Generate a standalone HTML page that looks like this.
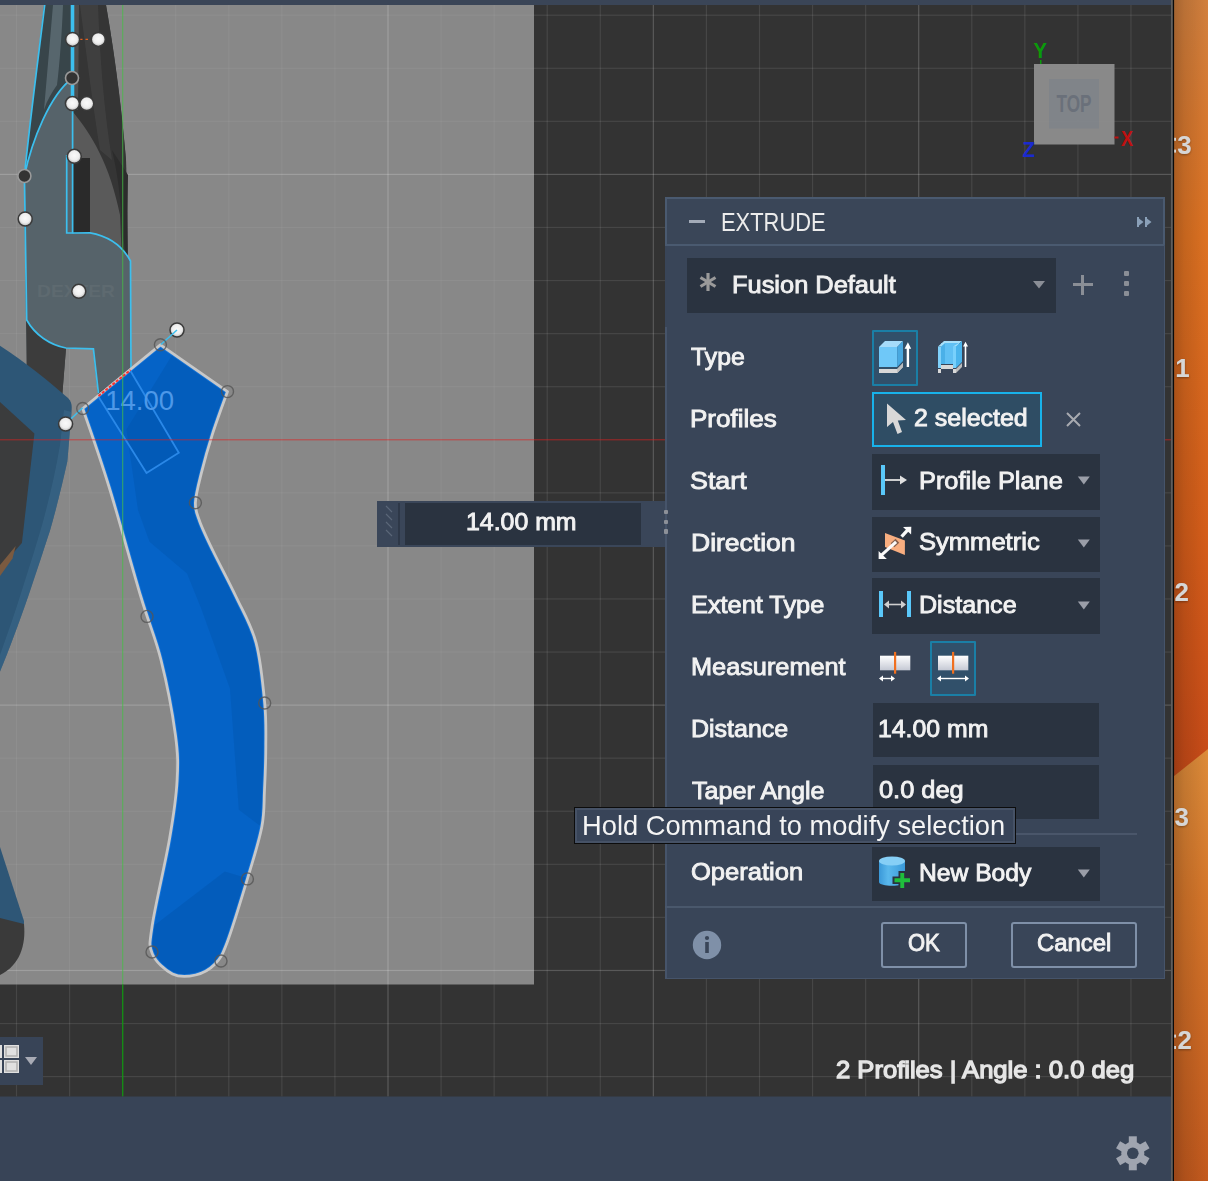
<!DOCTYPE html>
<html><head><meta charset="utf-8">
<style>
html,body{margin:0;padding:0;width:1208px;height:1181px;overflow:hidden;background:#333;}
body{position:relative;font-family:"Liberation Sans",sans-serif;}
.abs{position:absolute;}
.t{position:absolute;white-space:nowrap;transform-origin:0 0;font-family:"Liberation Sans",sans-serif;}
svg text{font-family:"Liberation Sans",sans-serif;}
</style></head><body>
<svg class="abs" width="1208" height="1181" viewBox="0 0 1208 1181">
<defs><linearGradient id="orng" x1="0" y1="0" x2="0" y2="1"><stop offset="0" stop-color="#d2803e"/><stop offset="0.2" stop-color="#de7222"/><stop offset="0.45" stop-color="#d65e1a"/><stop offset="0.66" stop-color="#c84a18"/><stop offset="1" stop-color="#c84a18"/></linearGradient><linearGradient id="orng2" x1="0" y1="0" x2="0" y2="1"><stop offset="0" stop-color="#de8c3a"/><stop offset="0.35" stop-color="#d6762a"/><stop offset="1" stop-color="#c45a1e"/></linearGradient><linearGradient id="oshadow" x1="0" y1="0" x2="1" y2="0"><stop offset="0" stop-color="#000" stop-opacity="0.22"/><stop offset="0.3" stop-color="#000" stop-opacity="0.12"/><stop offset="1" stop-color="#000" stop-opacity="0"/></linearGradient><linearGradient id="pl1" x1="0" y1="0" x2="1" y2="0"><stop offset="0" stop-color="#2f3a3f"/><stop offset="0.5" stop-color="#4a555a"/><stop offset="1" stop-color="#2e3436"/></linearGradient><linearGradient id="pl2" x1="0" y1="0" x2="1" y2="0"><stop offset="0" stop-color="#3a3a3a"/><stop offset="0.6" stop-color="#333"/><stop offset="1" stop-color="#222"/></linearGradient></defs>
<rect x="0" y="0" width="1173" height="1181" fill="#333333"/>
<rect x="0" y="5" width="534" height="979.5" fill="#888888"/>
<rect x="15.91" y="5" width="1.2" height="979.5" fill="#fff" opacity="0.050"/>
<rect x="15.91" y="984.5" width="1.2" height="112.0" fill="#fff" opacity="0.095"/>
<rect x="68.98" y="5" width="1.2" height="979.5" fill="#fff" opacity="0.050"/>
<rect x="68.98" y="984.5" width="1.2" height="112.0" fill="#fff" opacity="0.095"/>
<rect x="175.12" y="5" width="1.2" height="979.5" fill="#fff" opacity="0.050"/>
<rect x="175.12" y="984.5" width="1.2" height="112.0" fill="#fff" opacity="0.095"/>
<rect x="228.19" y="5" width="1.2" height="979.5" fill="#fff" opacity="0.050"/>
<rect x="228.19" y="984.5" width="1.2" height="112.0" fill="#fff" opacity="0.095"/>
<rect x="281.26" y="5" width="1.2" height="979.5" fill="#fff" opacity="0.050"/>
<rect x="281.26" y="984.5" width="1.2" height="112.0" fill="#fff" opacity="0.095"/>
<rect x="334.33" y="5" width="1.2" height="979.5" fill="#fff" opacity="0.050"/>
<rect x="334.33" y="984.5" width="1.2" height="112.0" fill="#fff" opacity="0.095"/>
<rect x="387.40" y="5" width="1.2" height="979.5" fill="#fff" opacity="0.190"/>
<rect x="387.40" y="984.5" width="1.2" height="112.0" fill="#fff" opacity="0.190"/>
<rect x="440.47" y="5" width="1.2" height="979.5" fill="#fff" opacity="0.050"/>
<rect x="440.47" y="984.5" width="1.2" height="112.0" fill="#fff" opacity="0.095"/>
<rect x="493.54" y="5" width="1.2" height="979.5" fill="#fff" opacity="0.050"/>
<rect x="493.54" y="984.5" width="1.2" height="112.0" fill="#fff" opacity="0.095"/>
<rect x="546.61" y="5" width="1.2" height="1091.5" fill="#fff" opacity="0.095"/>
<rect x="599.68" y="5" width="1.2" height="1091.5" fill="#fff" opacity="0.095"/>
<rect x="652.75" y="5" width="1.2" height="1091.5" fill="#fff" opacity="0.190"/>
<rect x="705.82" y="5" width="1.2" height="1091.5" fill="#fff" opacity="0.095"/>
<rect x="758.89" y="5" width="1.2" height="1091.5" fill="#fff" opacity="0.095"/>
<rect x="811.96" y="5" width="1.2" height="1091.5" fill="#fff" opacity="0.095"/>
<rect x="865.03" y="5" width="1.2" height="1091.5" fill="#fff" opacity="0.095"/>
<rect x="918.10" y="5" width="1.2" height="1091.5" fill="#fff" opacity="0.190"/>
<rect x="971.17" y="5" width="1.2" height="1091.5" fill="#fff" opacity="0.095"/>
<rect x="1024.24" y="5" width="1.2" height="1091.5" fill="#fff" opacity="0.095"/>
<rect x="1077.31" y="5" width="1.2" height="1091.5" fill="#fff" opacity="0.095"/>
<rect x="1130.38" y="5" width="1.2" height="1091.5" fill="#fff" opacity="0.095"/>
<rect x="0" y="14.60" width="534" height="1.2" fill="#fff" opacity="0.050"/>
<rect x="534" y="14.60" width="639" height="1.2" fill="#fff" opacity="0.095"/>
<rect x="0" y="67.67" width="534" height="1.2" fill="#fff" opacity="0.050"/>
<rect x="534" y="67.67" width="639" height="1.2" fill="#fff" opacity="0.095"/>
<rect x="0" y="120.74" width="534" height="1.2" fill="#fff" opacity="0.050"/>
<rect x="534" y="120.74" width="639" height="1.2" fill="#fff" opacity="0.095"/>
<rect x="0" y="173.81" width="534" height="1.2" fill="#fff" opacity="0.190"/>
<rect x="534" y="173.81" width="639" height="1.2" fill="#fff" opacity="0.190"/>
<rect x="0" y="226.88" width="534" height="1.2" fill="#fff" opacity="0.050"/>
<rect x="534" y="226.88" width="639" height="1.2" fill="#fff" opacity="0.095"/>
<rect x="0" y="279.95" width="534" height="1.2" fill="#fff" opacity="0.050"/>
<rect x="534" y="279.95" width="639" height="1.2" fill="#fff" opacity="0.095"/>
<rect x="0" y="333.02" width="534" height="1.2" fill="#fff" opacity="0.050"/>
<rect x="534" y="333.02" width="639" height="1.2" fill="#fff" opacity="0.095"/>
<rect x="0" y="386.09" width="534" height="1.2" fill="#fff" opacity="0.050"/>
<rect x="534" y="386.09" width="639" height="1.2" fill="#fff" opacity="0.095"/>
<rect x="0" y="492.23" width="534" height="1.2" fill="#fff" opacity="0.050"/>
<rect x="534" y="492.23" width="639" height="1.2" fill="#fff" opacity="0.095"/>
<rect x="0" y="545.30" width="534" height="1.2" fill="#fff" opacity="0.050"/>
<rect x="534" y="545.30" width="639" height="1.2" fill="#fff" opacity="0.095"/>
<rect x="0" y="598.37" width="534" height="1.2" fill="#fff" opacity="0.050"/>
<rect x="534" y="598.37" width="639" height="1.2" fill="#fff" opacity="0.095"/>
<rect x="0" y="651.44" width="534" height="1.2" fill="#fff" opacity="0.050"/>
<rect x="534" y="651.44" width="639" height="1.2" fill="#fff" opacity="0.095"/>
<rect x="0" y="704.51" width="534" height="1.2" fill="#fff" opacity="0.190"/>
<rect x="534" y="704.51" width="639" height="1.2" fill="#fff" opacity="0.190"/>
<rect x="0" y="757.58" width="534" height="1.2" fill="#fff" opacity="0.050"/>
<rect x="534" y="757.58" width="639" height="1.2" fill="#fff" opacity="0.095"/>
<rect x="0" y="810.65" width="534" height="1.2" fill="#fff" opacity="0.050"/>
<rect x="534" y="810.65" width="639" height="1.2" fill="#fff" opacity="0.095"/>
<rect x="0" y="863.72" width="534" height="1.2" fill="#fff" opacity="0.050"/>
<rect x="534" y="863.72" width="639" height="1.2" fill="#fff" opacity="0.095"/>
<rect x="0" y="916.79" width="534" height="1.2" fill="#fff" opacity="0.050"/>
<rect x="534" y="916.79" width="639" height="1.2" fill="#fff" opacity="0.095"/>
<rect x="0" y="969.86" width="534" height="1.2" fill="#fff" opacity="0.190"/>
<rect x="534" y="969.86" width="639" height="1.2" fill="#fff" opacity="0.190"/>
<rect x="0" y="1022.93" width="1173" height="1.2" fill="#fff" opacity="0.095"/>
<rect x="0" y="1076.00" width="1173" height="1.2" fill="#fff" opacity="0.095"/>
<path d="M44,5 L106,5 C113,45 121,100 126,160 L128,262 L129,345 L131,372 L98,394 L93,349 L66,348 L62,398 L27,398 L26,320 L24,176 C30,120 38,60 44,5 Z" fill="#3a3e40"/>
<path d="M73,5 L106,5 C113,45 121,100 126,160 L128,262 L73,262 Z" fill="#353535"/>
<path d="M80,5 L98,5 C100,60 104,110 112,160 L100,150 C92,100 86,50 80,5 Z" fill="#444" opacity="0.7"/>
<path d="M73,112 C92,135 110,165 120,215 L122,262 L90,262 L90,158 L73,158 Z" fill="#5a5a5a"/>
<path d="M112,150 C118,175 121,200 122,230 L127,262 L128,175 Z" fill="#2c2c2c"/>
<rect x="73.5" y="158" width="16.5" height="75" fill="#2a2a2a"/>
<path d="M27,320 C35,335 50,345 66,348 L62,398 L27,398 Z" fill="#3c3c3c"/>
<path d="M44.7,5 L72.5,5 L72.5,78 C50,95 32,140 24.4,176 C30,120 38,60 44.7,5 Z" fill="#38454a"/>
<path d="M53,5 L63,5 C62,30 60,60 57,85 C52,92 47,100 44,110 C47,75 50,40 53,5 Z" fill="#62727a" opacity="0.75"/>
<path d="M73.5,5 L79,5 L78,110 L73.5,110 Z" fill="#555" opacity="0.8"/>
<path d="M72.5,78 L72.5,233 L90,232.8 C108,236 122,245 130.5,261 L131,370 L98.4,392.7 L93.4,348.8 L66,348 C50,345 35,335 26.7,320 L24.4,176 C32,140 50,95 72.5,78 Z" fill="#56636a"/>
<text x="37" y="297" font-family="Liberation Sans" font-weight="700" font-size="17" fill="#5e6a70" textLength="78" lengthAdjust="spacingAndGlyphs">DEXTER</text>
<path d="M44.7,5 C38,60 30,120 24.4,176 L26.7,320 C35,335 50,345 66,348 L93.4,348.8 L98.4,393" fill="none" stroke="#3cbfee" stroke-width="1.7"/>
<path d="M72.6,5 L72.6,233 L66.7,233 L66.7,155" fill="none" stroke="#3cbfee" stroke-width="1.7"/>
<path d="M72.5,5 L72.5,100" fill="none" stroke="#3cbfee" stroke-width="3.6"/>
<path d="M72.5,78 C50,95 32,140 24.4,176" fill="none" stroke="#3cbfee" stroke-width="1.7"/>
<path d="M72.5,233 L90,232.8 C108,236 122,245 130.5,261 L131,371" fill="none" stroke="#3cbfee" stroke-width="1.7"/>
<path d="M80,39.4 L92,39.4" stroke="#e06020" stroke-width="1.2" stroke-dasharray="2.5,3"/>
<path d="M0,345.7 C25,362 50,382 68,398 C72,402 72,406 71.5,412 L67.3,461.5 C62,485 56,510 50,530.4 C42,555 33,582 25,605.6 C17,628 9,650 0,671.4 Z" fill="#2d5676"/>
<path d="M71.5,412 L67.3,461.5 C62,485 56,510 50,530.4 C42,555 33,582 25,605.6 C17,628 9,650 0,671.4 L0,655 C8,632 16,610 22,590 C30,565 38,540 44,518 C50,495 56,470 60,445 L64,410 Z" fill="#3d6a8a" opacity="0.55"/>
<path d="M0,402 L34.4,433.4 L21.9,543 L0,568 Z" fill="#3b3c3d"/>
<path d="M0,565 L15.7,546 L12.5,558.6 L0,576 Z" fill="#7a5a40"/>
<path d="M0,847 L24,921 L24,925 L0,925 Z" fill="#2e5676"/>
<path d="M0,918 L24,924 C26,945 20,965 0,975 Z" fill="#3a3a3a"/>
<path d="M160.40,344.80 C160.40,344.80 227.50,391.60 227.50,391.60 C227.50,391.60 216.52,421.47 212.20,434.90 C207.88,448.33 204.40,460.90 201.60,472.20 C198.80,483.50 195.72,494.50 195.40,502.70 C195.08,510.90 196.80,513.43 199.70,521.40 C202.60,529.37 206.77,537.98 212.80,550.50 C218.83,563.02 228.70,581.15 235.90,596.50 C243.10,611.85 251.20,624.85 256.00,642.60 C260.80,660.35 263.07,685.72 264.70,703.00 C266.33,720.28 265.83,731.80 265.80,746.30 C265.77,760.80 265.17,776.55 264.50,790.00 C263.83,803.45 264.65,812.18 261.80,827.00 C258.95,841.82 253.17,859.70 247.40,878.90 C241.63,898.10 232.60,928.02 227.20,942.20 C221.80,956.38 220.27,958.53 215.00,964.00 C209.73,969.47 202.68,973.33 195.60,975.00 C188.52,976.67 179.72,977.55 172.50,974.00 C165.28,970.45 155.67,961.87 152.30,953.70 C148.93,945.53 149.42,944.20 152.30,925.00 C155.18,905.80 165.47,862.52 169.60,838.50 C173.73,814.48 176.13,798.18 177.10,780.90 C178.07,763.62 178.08,754.95 175.40,734.80 C172.72,714.65 166.77,683.05 161.00,660.00 C155.23,636.95 149.45,625.33 140.80,596.50 C132.15,567.67 118.78,518.33 109.10,487.00 C99.42,455.67 82.70,408.50 82.70,408.50 C82.70,408.50 160.40,344.80 160.40,344.80 Z" fill="#0563c7"/>
<clipPath id="bclip"><path d="M160.40,344.80 C160.40,344.80 227.50,391.60 227.50,391.60 C227.50,391.60 216.52,421.47 212.20,434.90 C207.88,448.33 204.40,460.90 201.60,472.20 C198.80,483.50 195.72,494.50 195.40,502.70 C195.08,510.90 196.80,513.43 199.70,521.40 C202.60,529.37 206.77,537.98 212.80,550.50 C218.83,563.02 228.70,581.15 235.90,596.50 C243.10,611.85 251.20,624.85 256.00,642.60 C260.80,660.35 263.07,685.72 264.70,703.00 C266.33,720.28 265.83,731.80 265.80,746.30 C265.77,760.80 265.17,776.55 264.50,790.00 C263.83,803.45 264.65,812.18 261.80,827.00 C258.95,841.82 253.17,859.70 247.40,878.90 C241.63,898.10 232.60,928.02 227.20,942.20 C221.80,956.38 220.27,958.53 215.00,964.00 C209.73,969.47 202.68,973.33 195.60,975.00 C188.52,976.67 179.72,977.55 172.50,974.00 C165.28,970.45 155.67,961.87 152.30,953.70 C148.93,945.53 149.42,944.20 152.30,925.00 C155.18,905.80 165.47,862.52 169.60,838.50 C173.73,814.48 176.13,798.18 177.10,780.90 C178.07,763.62 178.08,754.95 175.40,734.80 C172.72,714.65 166.77,683.05 161.00,660.00 C155.23,636.95 149.45,625.33 140.80,596.50 C132.15,567.67 118.78,518.33 109.10,487.00 C99.42,455.67 82.70,408.50 82.70,408.50 C82.70,408.50 160.40,344.80 160.40,344.80 Z"/></clipPath>
<g clip-path="url(#bclip)">
<path d="M172.5,354.6 L126.4,429.5 L138,510 L149.5,541.8 L187,573.5 L201,608 L230,688.7 L238.8,809.7 L261.8,827 L300,827 L300,330 Z" fill="#0052a8" opacity="0.36"/>
<path d="M130,371 L178.8,452.7 L146.5,473.1 L98.5,396.7 Z" fill="#0052a8" opacity="0.25"/>
<path d="M155.5,924.4 L224.8,871.6 L243,877 L300,877 L300,1000 L100,1000 L100,924 Z" fill="#0052a8" opacity="0.38"/>
<path d="M160.40,344.80 C160.40,344.80 227.50,391.60 227.50,391.60 C227.50,391.60 216.52,421.47 212.20,434.90 C207.88,448.33 204.40,460.90 201.60,472.20 C198.80,483.50 195.72,494.50 195.40,502.70 C195.08,510.90 196.80,513.43 199.70,521.40 C202.60,529.37 206.77,537.98 212.80,550.50 C218.83,563.02 228.70,581.15 235.90,596.50 C243.10,611.85 251.20,624.85 256.00,642.60 C260.80,660.35 263.07,685.72 264.70,703.00 C266.33,720.28 265.83,731.80 265.80,746.30 C265.77,760.80 265.17,776.55 264.50,790.00 C263.83,803.45 264.65,812.18 261.80,827.00 C258.95,841.82 253.17,859.70 247.40,878.90 C241.63,898.10 232.60,928.02 227.20,942.20 C221.80,956.38 220.27,958.53 215.00,964.00 C209.73,969.47 202.68,973.33 195.60,975.00 C188.52,976.67 179.72,977.55 172.50,974.00 C165.28,970.45 155.67,961.87 152.30,953.70 C148.93,945.53 149.42,944.20 152.30,925.00 C155.18,905.80 165.47,862.52 169.60,838.50 C173.73,814.48 176.13,798.18 177.10,780.90 C178.07,763.62 178.08,754.95 175.40,734.80 C172.72,714.65 166.77,683.05 161.00,660.00 C155.23,636.95 149.45,625.33 140.80,596.50 C132.15,567.67 118.78,518.33 109.10,487.00 C99.42,455.67 82.70,408.50 82.70,408.50 C82.70,408.50 160.40,344.80 160.40,344.80 Z" fill="none" stroke="#2a8cf5" stroke-width="4.5" opacity="0.45"/>
</g>
<path d="M160.40,344.80 C160.40,344.80 227.50,391.60 227.50,391.60 C227.50,391.60 216.52,421.47 212.20,434.90 C207.88,448.33 204.40,460.90 201.60,472.20 C198.80,483.50 195.72,494.50 195.40,502.70 C195.08,510.90 196.80,513.43 199.70,521.40 C202.60,529.37 206.77,537.98 212.80,550.50 C218.83,563.02 228.70,581.15 235.90,596.50 C243.10,611.85 251.20,624.85 256.00,642.60 C260.80,660.35 263.07,685.72 264.70,703.00 C266.33,720.28 265.83,731.80 265.80,746.30 C265.77,760.80 265.17,776.55 264.50,790.00 C263.83,803.45 264.65,812.18 261.80,827.00 C258.95,841.82 253.17,859.70 247.40,878.90 C241.63,898.10 232.60,928.02 227.20,942.20 C221.80,956.38 220.27,958.53 215.00,964.00 C209.73,969.47 202.68,973.33 195.60,975.00 C188.52,976.67 179.72,977.55 172.50,974.00 C165.28,970.45 155.67,961.87 152.30,953.70 C148.93,945.53 149.42,944.20 152.30,925.00 C155.18,905.80 165.47,862.52 169.60,838.50 C173.73,814.48 176.13,798.18 177.10,780.90 C178.07,763.62 178.08,754.95 175.40,734.80 C172.72,714.65 166.77,683.05 161.00,660.00 C155.23,636.95 149.45,625.33 140.80,596.50 C132.15,567.67 118.78,518.33 109.10,487.00 C99.42,455.67 82.70,408.50 82.70,408.50 C82.70,408.50 160.40,344.80 160.40,344.80 Z" fill="none" stroke="#c8c8c8" stroke-width="2.8" stroke-linejoin="round"/>
<path d="M130.5,371 L178.8,452.7 L146.5,473.1 L98.5,396.7" fill="none" stroke="#2a88e8" stroke-width="1.8"/>
<path d="M98.5,396 L130.5,370" stroke="#ff3030" stroke-width="2" stroke-dasharray="3,1.5"/>
<text x="105.2" y="409.5" font-family="Liberation Sans" font-size="27.5" fill="#4d98e8" textLength="69" lengthAdjust="spacingAndGlyphs">14.00</text>
<rect x="122.0" y="5" width="1.3" height="979.5" fill="#44c044" opacity="0.6"/>
<rect x="122.0" y="984.5" width="1.4" height="112.0" fill="#109a10" opacity="0.85"/>
<rect x="0" y="439.1" width="1173" height="1.3" fill="#e02020" opacity="0.5"/>
<defs><radialGradient id="wg" cx="0.5" cy="0.45" r="0.55"><stop offset="0" stop-color="#fafafa"/><stop offset="0.6" stop-color="#eeeeee"/><stop offset="1" stop-color="#b8b8b8"/></radialGradient></defs>
<circle cx="72.6" cy="39.4" r="7.0" fill="url(#wg)" stroke="#3a3a3a" stroke-width="1.5"/>
<circle cx="98.3" cy="39.4" r="7.0" fill="url(#wg)" stroke="#3a3a3a" stroke-width="1.5"/>
<circle cx="72.0" cy="78.0" r="6.5" fill="#333" stroke="#9a9a9a" stroke-width="1.6"/>
<circle cx="86.8" cy="103.6" r="7.0" fill="url(#wg)" stroke="#3a3a3a" stroke-width="1.5"/>
<circle cx="72.4" cy="103.6" r="7.0" fill="url(#wg)" stroke="#3a3a3a" stroke-width="1.5"/>
<circle cx="74.3" cy="156.3" r="7.0" fill="url(#wg)" stroke="#3a3a3a" stroke-width="1.5"/>
<circle cx="24.4" cy="176.0" r="6.5" fill="#333" stroke="#9a9a9a" stroke-width="1.6"/>
<circle cx="25.2" cy="219.0" r="7.0" fill="url(#wg)" stroke="#3a3a3a" stroke-width="1.5"/>
<circle cx="78.8" cy="291.3" r="7.0" fill="url(#wg)" stroke="#3a3a3a" stroke-width="1.5"/>
<circle cx="177.0" cy="330.0" r="7.0" fill="url(#wg)" stroke="#3a3a3a" stroke-width="1.5"/>
<path d="M160.9,344.5 L177,330" stroke="#3cbfee" stroke-width="1.5"/>
<path d="M82.6,407.8 L65.6,424" stroke="#3cbfee" stroke-width="1.5"/>
<circle cx="65.6" cy="424.0" r="7.0" fill="url(#wg)" stroke="#3a3a3a" stroke-width="1.5"/>
<circle cx="160.4" cy="344.8" r="6.0" fill="none" stroke="#555" stroke-width="1.4" opacity="0.8"/>
<circle cx="227.5" cy="391.6" r="6.0" fill="none" stroke="#555" stroke-width="1.4" opacity="0.8"/>
<circle cx="82.7" cy="408.5" r="6.0" fill="none" stroke="#555" stroke-width="1.4" opacity="0.8"/>
<circle cx="195.4" cy="502.7" r="6.0" fill="none" stroke="#555" stroke-width="1.4" opacity="0.8"/>
<circle cx="147.0" cy="616.4" r="6.0" fill="none" stroke="#555" stroke-width="1.4" opacity="0.8"/>
<circle cx="264.7" cy="703.0" r="6.0" fill="none" stroke="#555" stroke-width="1.4" opacity="0.8"/>
<circle cx="247.4" cy="878.9" r="6.0" fill="none" stroke="#555" stroke-width="1.4" opacity="0.8"/>
<circle cx="221.0" cy="961.0" r="6.0" fill="none" stroke="#555" stroke-width="1.4" opacity="0.8"/>
<circle cx="152.0" cy="952.0" r="6.0" fill="none" stroke="#555" stroke-width="1.4" opacity="0.8"/>
<rect x="1034" y="64" width="80.5" height="80.5" fill="#8e8e8e" opacity="0.94"/>
<rect x="1049" y="79" width="50" height="49.5" fill="#7e838a" opacity="0.8"/>
<text x="1056.5" y="111.8" font-family="Liberation Sans" font-weight="700" font-size="23" fill="#6a707a" textLength="35" lengthAdjust="spacingAndGlyphs">TOP</text>
<text x="1033.5" y="58" font-family="Liberation Sans" font-weight="700" font-size="22" fill="#0a9a0a" textLength="13.5" lengthAdjust="spacingAndGlyphs">Y</text>
<text x="1022.5" y="157.4" font-family="Liberation Sans" font-weight="700" font-size="22" fill="#1a2ad0" textLength="12.5" lengthAdjust="spacingAndGlyphs">Z</text>
<text x="1121" y="145.6" font-family="Liberation Sans" font-weight="700" font-size="22" fill="#c01010" textLength="12" lengthAdjust="spacingAndGlyphs">X</text>
<rect x="1114.5" y="136.5" width="4" height="2" fill="#c01010"/>
<rect x="1040" y="60" width="1.5" height="4" fill="#0a9a0a"/>
<rect x="0" y="1096.5" width="1173" height="84.5" fill="#384457"/>
<rect x="0" y="0" width="1173" height="5" fill="#3a4557"/>
<rect x="1171" y="0" width="2" height="1181" fill="#5e5e5e"/>
<rect x="1172.8" y="0" width="1.4" height="1181" fill="#0a0a0a"/>
<rect x="1174.2" y="0" width="34" height="1181" fill="url(#orng)"/>
<path d="M1174.2,776 L1208,749 L1208,1181 L1174.2,1181 Z" fill="url(#orng2)"/>
<rect x="1174.2" y="0" width="34" height="1181" fill="url(#oshadow)"/>
<defs><filter id="dsh" x="-50%" y="-50%" width="200%" height="200%"><feDropShadow dx="0" dy="1" stdDeviation="1.2" flood-color="#000" flood-opacity="0.35"/></filter></defs>
<text x="1177.32" y="153.5" font-family="Liberation Sans" font-weight="700" font-size="25.9" fill="#d6d6d6" filter="url(#dsh)">3</text>
<text x="1175.28" y="377.1" font-family="Liberation Sans" font-weight="700" font-size="25.9" fill="#d6d6d6" filter="url(#dsh)">1</text>
<text x="1174.49" y="601.3" font-family="Liberation Sans" font-weight="700" font-size="25.9" fill="#d6d6d6" filter="url(#dsh)">2</text>
<text x="1174.42" y="825.7" font-family="Liberation Sans" font-weight="700" font-size="25.9" fill="#d6d6d6" filter="url(#dsh)">3</text>
<text x="1177.49" y="1049.0" font-family="Liberation Sans" font-weight="700" font-size="25.9" fill="#d6d6d6" filter="url(#dsh)">2</text>
<rect x="1174.2" y="137.8" width="1.8" height="3" fill="#d6d6d6"/>
<rect x="1174.2" y="149.6" width="1.8" height="3" fill="#d6d6d6"/>
<rect x="1174.2" y="1034.6" width="1.8" height="3" fill="#d6d6d6"/>
<rect x="1174.2" y="1046.0" width="1.8" height="3" fill="#d6d6d6"/>
<rect x="0" y="1037" width="43" height="48" fill="#384457"/>
<rect x="4" y="1045" width="15" height="13" fill="#e0e0e0"/>
<rect x="6" y="1047" width="11" height="9" fill="none" stroke="#b0b0b0" stroke-width="1.5"/>
<rect x="0" y="1045" width="2" height="13" fill="#e0e0e0"/>
<rect x="4" y="1060" width="15" height="13" fill="#e0e0e0"/>
<rect x="6" y="1062" width="11" height="9" fill="none" stroke="#b0b0b0" stroke-width="1.5"/>
<rect x="0" y="1060" width="2" height="13" fill="#e0e0e0"/>
<path d="M25,1057 L37,1057 L31,1065 Z" fill="#a8abb5"/>
<rect x="-4" y="-17" width="8" height="8" fill="#a0a5b0" transform="translate(1132.8,1153.3) rotate(0)"/>
<rect x="-4" y="-17" width="8" height="8" fill="#a0a5b0" transform="translate(1132.8,1153.3) rotate(60)"/>
<rect x="-4" y="-17" width="8" height="8" fill="#a0a5b0" transform="translate(1132.8,1153.3) rotate(120)"/>
<rect x="-4" y="-17" width="8" height="8" fill="#a0a5b0" transform="translate(1132.8,1153.3) rotate(180)"/>
<rect x="-4" y="-17" width="8" height="8" fill="#a0a5b0" transform="translate(1132.8,1153.3) rotate(240)"/>
<rect x="-4" y="-17" width="8" height="8" fill="#a0a5b0" transform="translate(1132.8,1153.3) rotate(300)"/>
<circle cx="1132.8" cy="1153.3" r="11.5" fill="#a0a5b0"/>
<circle cx="1132.8" cy="1153.3" r="5.8" fill="#384457"/>
</svg>
<div class="abs" style="left:377px;top:501px;width:296px;height:46px;background:#3a4659"></div>
<div class="abs" style="left:398px;top:503px;width:1.5px;height:42px;background:#2e3848"></div>
<div class="abs" style="left:404.6px;top:503.3px;width:236.6px;height:41.4px;background:#2a3340"></div>
<svg class="abs" style="left:384px;top:504px" width="10" height="40"><path d="M2,2 L8,8 M2,10 L8,16 M2,18 L8,24 M2,26 L8,32" stroke="#5a6678" stroke-width="1.2"/></svg>
<div class="t" style="left:465.99px;top:511.41px;font-size:23.66px;line-height:23.66px;font-weight:400;color:#f2f2f2;transform:scaleX(1.0511);-webkit-text-stroke:0.90px #f2f2f2;">14.00 mm</div>
<div class="t" style="left:836.24px;top:1058.10px;font-size:24.07px;line-height:24.07px;font-weight:400;color:#e6e6e6;transform:scaleX(1.0630);-webkit-text-stroke:1.30px #e6e6e6;">2 Profiles | Angle : 0.0 deg</div>
<div class="abs" style="left:665.0px;top:197.0px;width:499.8px;height:782.3px;background:#394558;"></div>
<div class="abs" style="left:665.0px;top:197.0px;width:499.8px;height:48.7px;background:#3a4658;border:2px solid #4a5a70;box-sizing:border-box"></div>
<div class="abs" style="left:665.0px;top:245px;width:499.8px;height:734.3px;border:1.6px solid #46546a;border-top:none;border-left:none;box-sizing:border-box"></div>
<div class="abs" style="left:665.0px;top:327px;width:1.6px;height:652.3px;background:#46546a"></div>
<div class="abs" style="left:689px;top:219.7px;width:16px;height:3.2px;background:#a3abb8"></div>
<div class="t" style="left:720.85px;top:209.64px;font-size:25.58px;line-height:25.58px;font-weight:400;color:#ececec;transform:scaleX(0.8565);">EXTRUDE</div>
<svg class="abs" style="left:1136px;top:216px" width="17" height="12"><path d="M1,1 L3,1 L3,11 L1,11 Z M3,2.5 L7.5,6 L3,9.5 Z M9,1 L11,1 L11,11 L9,11 Z M11,2.5 L15.5,6 L11,9.5 Z" fill="#8aa0b8"/></svg>
<div class="abs" style="left:687px;top:258.4px;width:368.5px;height:54.3px;background:#2a3340;"></div>
<svg class="abs" style="left:696px;top:270px" width="24" height="24"><g stroke="#9a9a9a" stroke-width="3.2" stroke-linecap="butt"><path d="M12,3 L12,21"/><path d="M4.5,7.5 L19.5,16.5"/><path d="M19.5,7.5 L4.5,16.5"/></g></svg>
<div class="t" style="left:732.43px;top:272.59px;font-size:24.39px;line-height:24.39px;font-weight:400;color:#f0f0f0;transform:scaleX(1.0423);-webkit-text-stroke:0.90px #f0f0f0;">Fusion Default</div>
<svg class="abs" style="left:1032px;top:280px" width="14" height="10"><path d="M1,1 L13,1 L7,8.5 Z" fill="#8a8e96"/></svg>
<div class="abs" style="left:1072.5px;top:283.3px;width:20px;height:3.2px;background:#8a8e96"></div>
<div class="abs" style="left:1081px;top:274.8px;width:3.2px;height:20px;background:#8a8e96"></div>
<div class="abs" style="left:1123.5px;top:271.2px;width:5px;height:5px;background:#8a8e96;border-radius:1px"></div>
<div class="abs" style="left:1123.5px;top:281.2px;width:5px;height:5px;background:#8a8e96;border-radius:1px"></div>
<div class="abs" style="left:1123.5px;top:291.2px;width:5px;height:5px;background:#8a8e96;border-radius:1px"></div>
<div class="t" style="left:691.06px;top:345.09px;font-size:24.39px;line-height:24.39px;font-weight:400;color:#f2f2f2;transform:scaleX(1.0168);-webkit-text-stroke:0.90px #f2f2f2;">Type</div>
<div class="t" style="left:689.98px;top:406.89px;font-size:24.39px;line-height:24.39px;font-weight:400;color:#f2f2f2;transform:scaleX(1.0681);-webkit-text-stroke:0.90px #f2f2f2;">Profiles</div>
<div class="t" style="left:690.15px;top:468.99px;font-size:24.39px;line-height:24.39px;font-weight:400;color:#f2f2f2;transform:scaleX(1.1002);-webkit-text-stroke:0.90px #f2f2f2;">Start</div>
<div class="t" style="left:690.64px;top:531.29px;font-size:24.39px;line-height:24.39px;font-weight:400;color:#f2f2f2;transform:scaleX(1.0874);-webkit-text-stroke:0.90px #f2f2f2;">Direction</div>
<div class="t" style="left:690.73px;top:593.39px;font-size:24.39px;line-height:24.39px;font-weight:400;color:#f2f2f2;transform:scaleX(1.0386);-webkit-text-stroke:0.90px #f2f2f2;">Extent Type</div>
<div class="t" style="left:690.74px;top:654.99px;font-size:24.39px;line-height:24.39px;font-weight:400;color:#f2f2f2;transform:scaleX(1.0376);-webkit-text-stroke:0.90px #f2f2f2;">Measurement</div>
<div class="t" style="left:691.06px;top:716.59px;font-size:24.39px;line-height:24.39px;font-weight:400;color:#f2f2f2;transform:scaleX(1.0245);-webkit-text-stroke:0.90px #f2f2f2;">Distance</div>
<div class="t" style="left:691.76px;top:778.99px;font-size:24.39px;line-height:24.39px;font-weight:400;color:#f2f2f2;transform:scaleX(1.0298);-webkit-text-stroke:0.90px #f2f2f2;">Taper Angle</div>
<div class="t" style="left:691.41px;top:860.49px;font-size:24.39px;line-height:24.39px;font-weight:400;color:#f2f2f2;transform:scaleX(1.0478);-webkit-text-stroke:0.90px #f2f2f2;">Operation</div>
<div class="abs" style="left:872.1px;top:330.1px;width:45.8px;height:55.8px;background:#31506a;border:2px solid #1a7fa6;box-sizing:border-box;border-radius:1px"></div>
<svg class="abs" style="left:878.9px;top:338px" width="36" height="40" viewBox="0 0 36 40"><path d="M0,31 L18.2,31 L24,25 L24,29 L18.2,35 L0,35 Z" fill="#d8d8d8"/><path d="M18.2,31 L24,25 L24,29 L18.2,35 Z" fill="#bdbdbd"/><path d="M0,9 L18.2,9 L18.2,29 L0,29 Z" fill="#6fc8f8"/><path d="M0,9 L6,3 L24,3 L18.2,9 Z" fill="#a6dcfa"/><path d="M18.2,9 L24,3 L24,23 L18.2,29 Z" fill="#48a8e0"/></svg>
<svg class="abs" style="left:938.0px;top:338px" width="36" height="40" viewBox="0 0 36 40"><path d="M0,31 L3,31 L3,35 L0,35 Z M15,31 L18,31 L18,35 L15,35 Z M3,27 L15,27 L15,31 L3,31 Z" fill="#d8d8d8"/><path d="M18,31 L24,25 L24,29 L18,35 Z" fill="#bdbdbd"/><path d="M3,5 L21,5 L21,26 L3,26 Z" fill="#60c0f4"/><path d="M3,8.5 L7,5 L7,26 L3,26 Z" fill="#4ab0e8"/><path d="M0,8.5 L6,3 L24,3 L18,8.5 Z M3,8.5 L7,5 L21,5 L15,8.5 Z" fill="#a8e0fa" fill-rule="evenodd"/><rect x="0" y="8.5" width="3" height="21.5" fill="#7fd0fa"/><rect x="15" y="8.5" width="3" height="21.5" fill="#78d0fc"/><path d="M18,8.5 L24,3 L24,24 L18,30 Z" fill="#4ab4ec"/></svg>
<svg class="abs" style="left:902px;top:340px" width="12" height="30"><path d="M5.9,2.2 L9.2,8.8 L7.1,8.8 L7.1,27 L4.7,27 L4.7,8.8 L2.6,8.8 Z" fill="#fff"/></svg>
<svg class="abs" style="left:960px;top:340px" width="12" height="30"><path d="M5.5,1.8 L8,6.5 L6.3,6.5 L6.3,27 L4.7,27 L4.7,6.5 L3,6.5 Z" fill="#fff"/></svg>
<div class="abs" style="left:872.3px;top:392.3px;width:169.4px;height:54.8px;background:#2f4d64;border:2.2px solid #18b2ea;box-sizing:border-box"></div>
<svg class="abs" style="left:885px;top:402px" width="24" height="34"><path d="M2,1.5 L2,25 L8,20 L12.5,32 L17,30 L12.8,18.5 L21,18 Z" fill="#d8d8d8"/></svg>
<div class="t" style="left:914.41px;top:406.49px;font-size:24.39px;line-height:24.39px;font-weight:400;color:#f2f2f2;transform:scaleX(1.0237);-webkit-text-stroke:0.90px #f2f2f2;">2 selected</div>
<svg class="abs" style="left:1065px;top:411px" width="17" height="17"><path d="M2,2 L15,15 M15,2 L2,15" stroke="#a8aab0" stroke-width="2"/></svg>
<div class="abs" style="left:872.2px;top:454.3px;width:227.5px;height:55.4px;background:#2a3340;"></div>
<svg class="abs" style="left:1076.5px;top:475.8px" width="14" height="10"><path d="M0.8,0.5 L12.8,0.5 L6.8,8.5 Z" fill="#9a9ea8"/></svg>
<div class="abs" style="left:872.2px;top:516.6px;width:227.5px;height:55.4px;background:#2a3340;"></div>
<svg class="abs" style="left:1076.5px;top:538.6px" width="14" height="10"><path d="M0.8,0.5 L12.8,0.5 L6.8,8.5 Z" fill="#9a9ea8"/></svg>
<div class="abs" style="left:872.2px;top:578.4px;width:227.5px;height:55.4px;background:#2a3340;"></div>
<svg class="abs" style="left:1076.5px;top:600.6px" width="14" height="10"><path d="M0.8,0.5 L12.8,0.5 L6.8,8.5 Z" fill="#9a9ea8"/></svg>
<div class="abs" style="left:881px;top:465px;width:4px;height:30px;background:#5ac8fa"></div>
<svg class="abs" style="left:884px;top:473px" width="26" height="14"><path d="M1,7 L21,7" stroke="#e0e0e0" stroke-width="1.8"/><path d="M16,2.5 L23,7 L16,11.5 Z" fill="#e0e0e0"/></svg>
<div class="t" style="left:918.83px;top:469.19px;font-size:24.39px;line-height:24.39px;font-weight:400;color:#f2f2f2;transform:scaleX(1.0402);-webkit-text-stroke:0.90px #f2f2f2;">Profile Plane</div>
<svg class="abs" style="left:876px;top:524px" width="40" height="40" viewBox="0 0 40 40"><path d="M9,8.9 L28.9,16.6 L28.9,31 L9,23.1 Z" fill="#f8ae80"/><path d="M21.4,16.7 L16.5,21.2" stroke="#86604c" stroke-width="5.4"/><path d="M20.1,17.9 L5.5,31.2" stroke="#fafafa" stroke-width="3.1"/><path d="M2.6,27 L2.6,35 L10.8,35 Z" fill="#fafafa"/><path d="M25.6,12.6 L32,5.6" stroke="#fafafa" stroke-width="3.3"/><path d="M27,2.9 L35.3,2.7 L35.1,10.4 Z" fill="#fafafa"/></svg>
<div class="t" style="left:918.71px;top:530.49px;font-size:24.39px;line-height:24.39px;font-weight:400;color:#f2f2f2;transform:scaleX(1.0482);-webkit-text-stroke:0.90px #f2f2f2;">Symmetric</div>
<div class="abs" style="left:879.1px;top:591px;width:4px;height:26px;background:#5ac8fa"></div>
<div class="abs" style="left:907.1px;top:591px;width:4px;height:26px;background:#5ac8fa"></div>
<svg class="abs" style="left:883px;top:598px" width="24" height="13"><path d="M3,6.5 L21,6.5" stroke="#cfcfcf" stroke-width="1.6"/><path d="M1,6.5 L6,2.5 L6,10.5 Z M23,6.5 L18,2.5 L18,10.5 Z" fill="#cfcfcf"/></svg>
<div class="t" style="left:918.85px;top:592.79px;font-size:24.39px;line-height:24.39px;font-weight:400;color:#f2f2f2;transform:scaleX(1.0289);-webkit-text-stroke:0.90px #f2f2f2;">Distance</div>
<div class="abs" style="left:930.4px;top:640.5px;width:45.3px;height:55.1px;background:#31506a;border:2px solid #1a7fa6;box-sizing:border-box;border-radius:1px"></div>
<svg class="abs" style="left:878.0px;top:650px" width="34" height="34" viewBox="0 0 34 34"><defs><linearGradient id="mg878" x1="0" y1="0" x2="0" y2="1"><stop offset="0" stop-color="#ffffff"/><stop offset="1" stop-color="#c5c9d4"/></linearGradient></defs><rect x="2" y="5.7" width="30.3" height="14.6" fill="url(#mg878)"/><rect x="16" y="1.9" width="2.2" height="21.8" fill="#f07020"/><path d="M2.5,28.5 L15.5,28.5" stroke="#fff" stroke-width="1.4"/><path d="M1,28.5 L5,25.5 L5,31.5 Z M17,28.5 L13,25.5 L13,31.5 Z" fill="#fff"/></svg>
<svg class="abs" style="left:936.0px;top:650px" width="34" height="34" viewBox="0 0 34 34"><defs><linearGradient id="mg936" x1="0" y1="0" x2="0" y2="1"><stop offset="0" stop-color="#ffffff"/><stop offset="1" stop-color="#c5c9d4"/></linearGradient></defs><rect x="2" y="5.7" width="30.3" height="14.6" fill="url(#mg936)"/><rect x="16" y="1.9" width="2.2" height="21.8" fill="#f07020"/><path d="M2.5,28.5 L31.5,28.5" stroke="#fff" stroke-width="1.4"/><path d="M1,28.5 L5,25.5 L5,31.5 Z M33,28.5 L29,25.5 L29,31.5 Z" fill="#fff"/></svg>
<div class="abs" style="left:872.9px;top:702.9px;width:226.5px;height:53.8px;background:#2a3340;"></div>
<div class="abs" style="left:872.9px;top:765.1px;width:226.5px;height:53.9px;background:#2a3340;"></div>
<div class="t" style="left:878.00px;top:717.09px;font-size:24.39px;line-height:24.39px;font-weight:400;color:#f2f2f2;transform:scaleX(1.0179);-webkit-text-stroke:0.90px #f2f2f2;">14.00 mm</div>
<div class="t" style="left:878.84px;top:778.39px;font-size:24.39px;line-height:24.39px;font-weight:400;color:#f2f2f2;transform:scaleX(1.0419);-webkit-text-stroke:0.90px #f2f2f2;">0.0 deg</div>
<div class="abs" style="left:690px;top:833px;width:447px;height:1.6px;background:#4a566a"></div>
<div class="abs" style="left:872.2px;top:846.7px;width:227.5px;height:54.3px;background:#2a3340;"></div>
<svg class="abs" style="left:1076.5px;top:868.5px" width="14" height="10"><path d="M0.8,0.5 L12.8,0.5 L6.8,8.5 Z" fill="#9a9ea8"/></svg>
<svg class="abs" style="left:878px;top:855px" width="36" height="36" viewBox="0 0 36 36"><defs><linearGradient id="cyl" x1="0" y1="0" x2="1" y2="0"><stop offset="0" stop-color="#3a98d8"/><stop offset="0.35" stop-color="#5ab8ec"/><stop offset="1" stop-color="#3a9ada"/></linearGradient></defs><path d="M1,6 L1,27 C1,32 27,32 27,27 L27,6 Z" fill="url(#cyl)"/><ellipse cx="14" cy="6" rx="13" ry="4.6" fill="#86cff6"/><path d="M20.5,16 L28,16 L28,21.5 L34,21.5 L34,29 L28,29 L28,35 L20.5,35 L20.5,29 L14.5,29 L14.5,21.5 L20.5,21.5 Z" fill="#2a3340"/><path d="M22.3,18 L26.2,18 L26.2,23.3 L32,23.3 L32,27.2 L26.2,27.2 L26.2,33 L22.3,33 L22.3,27.2 L16.5,27.2 L16.5,23.3 L22.3,23.3 Z" fill="#1fbe3c"/></svg>
<div class="t" style="left:918.69px;top:860.99px;font-size:24.39px;line-height:24.39px;font-weight:400;color:#f2f2f2;transform:scaleX(1.0113);-webkit-text-stroke:0.90px #f2f2f2;">New Body</div>
<div class="abs" style="left:665.0px;top:906.2px;width:499.8px;height:2px;background:#4a586c"></div>
<svg class="abs" style="left:691px;top:929px" width="32" height="32"><circle cx="16" cy="16" r="14.2" fill="#7f90a8"/><rect x="14.2" y="13" width="3.6" height="11" fill="#394558"/><circle cx="16" cy="9" r="2.1" fill="#394558"/></svg>
<div class="abs" style="left:881.2px;top:921.6px;width:85.6px;height:46.9px;border:2px solid #7f90a8;border-radius:3px;box-sizing:border-box"></div>
<div class="abs" style="left:1011.3px;top:921.6px;width:125.3px;height:46.9px;border:2px solid #7f90a8;border-radius:3px;box-sizing:border-box"></div>
<div class="t" style="left:907.77px;top:931.39px;font-size:24.39px;line-height:24.39px;font-weight:400;color:#f2f2f2;transform:scaleX(0.9020);-webkit-text-stroke:0.90px #f2f2f2;">OK</div>
<div class="t" style="left:1036.77px;top:931.39px;font-size:24.39px;line-height:24.39px;font-weight:400;color:#f2f2f2;transform:scaleX(0.9785);-webkit-text-stroke:0.90px #f2f2f2;">Cancel</div>
<div class="abs" style="left:663.8px;top:509.8px;width:4.4px;height:4.4px;background:#8c9098;border-radius:1px"></div>
<div class="abs" style="left:663.8px;top:519.6px;width:4.4px;height:4.4px;background:#8c9098;border-radius:1px"></div>
<div class="abs" style="left:663.8px;top:529.4px;width:4.4px;height:4.4px;background:#8c9098;border-radius:1px"></div>
<div class="abs" style="left:574.3px;top:806.5px;width:441.4px;height:37px;background:#384458;border:1.5px solid #0c0c0c;box-shadow:inset 0 0 0 2px #465266;box-sizing:border-box"></div>
<div class="t" style="left:581.72px;top:811.57px;font-size:27.33px;line-height:27.33px;font-weight:400;color:#f4f4f4;transform:scaleX(0.9985);">Hold Command to modify selection</div>
</body></html>
